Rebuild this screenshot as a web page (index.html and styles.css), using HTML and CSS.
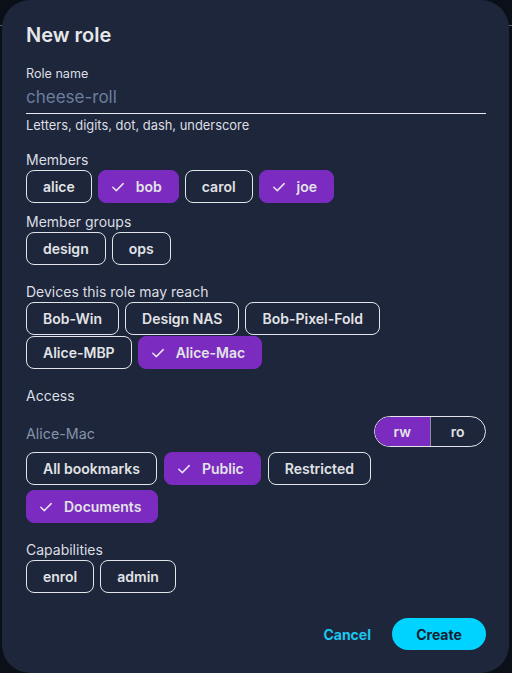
FILE: index.html
```html
<!DOCTYPE html>
<html lang="en">
<head>
<meta charset="utf-8">
<title>New role</title>
<link rel="stylesheet" href="styles.css">
</head>
<body>
<div class="dialog">
  <h1 class="title">New role</h1>
  <div class="field">
    <div class="field-label">Role name</div>
    <div class="input">cheese-roll</div>
    <div class="helper">Letters, digits, dot, dash, underscore</div>
  </div>

  <div class="label label-first">Members</div>
  <div class="chips">
    <span class="chip">alice</span>
    <span class="chip selected"><svg class="check" viewBox="0 0 12 12"><path d="M0.8 6.3 L4.3 9.6 L11.2 2.6"/></svg>bob</span>
    <span class="chip">carol</span>
    <span class="chip selected"><svg class="check" viewBox="0 0 12 12"><path d="M0.8 6.3 L4.3 9.6 L11.2 2.6"/></svg>joe</span>
  </div>

  <div class="label label-sub">Member groups</div>
  <div class="chips">
    <span class="chip">design</span>
    <span class="chip">ops</span>
  </div>

  <div class="label">Devices this role may reach</div>
  <div class="chips tight">
    <span class="chip">Bob-Win</span>
    <span class="chip">Design NAS</span>
    <span class="chip">Bob-Pixel-Fold</span>
    <span class="chip">Alice-MBP</span>
    <span class="chip selected"><svg class="check" viewBox="0 0 12 12"><path d="M0.8 6.3 L4.3 9.6 L11.2 2.6"/></svg>Alice-Mac</span>
  </div>

  <div class="label">Access</div>
  <div class="access-row">
    <span class="device-name">Alice-Mac</span>
    <div class="segmented">
      <span class="seg active">rw</span>
      <span class="seg">ro</span>
    </div>
  </div>
  <div class="chips loose">
    <span class="chip">All bookmarks</span>
    <span class="chip selected"><svg class="check" viewBox="0 0 12 12"><path d="M0.8 6.3 L4.3 9.6 L11.2 2.6"/></svg>Public</span>
    <span class="chip">Restricted</span>
    <span class="chip selected"><svg class="check" viewBox="0 0 12 12"><path d="M0.8 6.3 L4.3 9.6 L11.2 2.6"/></svg>Documents</span>
  </div>

  <div class="label">Capabilities</div>
  <div class="chips">
    <span class="chip">enrol</span>
    <span class="chip">admin</span>
  </div>

  <div class="footer">
    <button class="btn-text">Cancel</button>
    <button class="btn-primary">Create</button>
  </div>
</div>
</body>
</html>
```

FILE: styles.css
```css
html, body {
  margin: 0;
  padding: 0;
}
body {
  width: 512px;
  height: 673px;
  overflow: hidden;
  background: linear-gradient(to bottom, #0b1018 0, #0b1018 25px, #5a606c 25px, #5a606c 26px, #0b1018 26px, #0b1018 100%);
  font-family: "Inter", "Noto Sans", sans-serif;
  color: #dfe1e6;
}
.dialog {
  box-sizing: border-box;
  margin-left: 2px;
  width: 507px;
  height: 673px;
  padding: 23px 23px 0 24px;
  background: #1d263a;
  border-radius: 28px;
  display: flex;
  flex-direction: column;
}
.title {
  margin: 0;
  font-size: 20px;
  line-height: 24px;
  font-weight: 600;
  color: #e6e7ea;
}
.field {
  display: flex;
  flex-direction: column;
}
.field-label {
  margin-top: 19px;
  font-size: 12.6px;
  line-height: 16px;
  color: #dcdee3;
}
.input {
  margin-top: 3px;
  font-size: 17px;
  line-height: 24px;
  padding-bottom: 4px;
  border-bottom: 1px solid #e8e9ec;
  color: #6c7e9d;
}
.helper {
  margin-top: 4px;
  font-size: 12.9px;
  line-height: 16px;
  color: #dcdee3;
}
.label {
  margin-top: 19px;
  font-size: 14px;
  line-height: 16px;
  color: #dcdee3;
}
.label-first {
  margin-top: 18px;
}
.label-sub {
  margin-top: 11px;
}
.chips {
  margin-top: 2px;
  display: flex;
  flex-wrap: wrap;
  column-gap: 6px;
  row-gap: 1px;
}
.chips.loose {
  margin-top: 5px;
  row-gap: 5px;
  column-gap: 7px;
}
.chip {
  box-sizing: border-box;
  height: 33px;
  display: inline-flex;
  align-items: center;
  padding: 0 16px;
  border: 1px solid #e3e5e9;
  border-radius: 8px;
  font-size: 14px;
  font-weight: 600;
  color: #e2e3e7;
}
.chip.selected {
  background: #7b2bbf;
  border-color: #7b2bbf;
  padding-left: 13px;
}
.check {
  width: 12px;
  height: 12px;
  margin-right: 12px;
  fill: none;
  stroke: #e6e2ee;
  stroke-width: 1.5;
  stroke-linecap: round;
  stroke-linejoin: round;
}
.access-row {
  margin-top: 12px;
  display: flex;
  align-items: center;
  justify-content: space-between;
}
.device-name {
  font-size: 14.3px;
  color: #8592aa;
  padding-top: 3px;
}
.segmented {
  box-sizing: border-box;
  width: 112px;
  height: 31px;
  display: flex;
  border: 1px solid #e3e5e9;
  border-radius: 16px;
  overflow: hidden;
}
.seg {
  flex: 1;
  display: flex;
  align-items: center;
  justify-content: center;
  font-size: 14px;
  font-weight: 600;
  color: #e2e3e7;
}
.seg.active {
  background: #7b2bbf;
  border-right: 1px solid #8d8f9c;
}
.footer {
  margin-top: 25px;
  display: flex;
  justify-content: flex-end;
  align-items: center;
  gap: 9px;
}
.btn-text {
  background: none;
  border: none;
  padding: 0 12px;
  height: 32px;
  font-family: inherit;
  font-size: 14px;
  font-weight: 700;
  color: #1cc6ef;
}
.btn-primary {
  width: 94px;
  height: 32px;
  border: none;
  border-radius: 16px;
  background: #00d3ff;
  font-family: inherit;
  font-size: 14px;
  font-weight: 700;
  color: #152033;
}
```
